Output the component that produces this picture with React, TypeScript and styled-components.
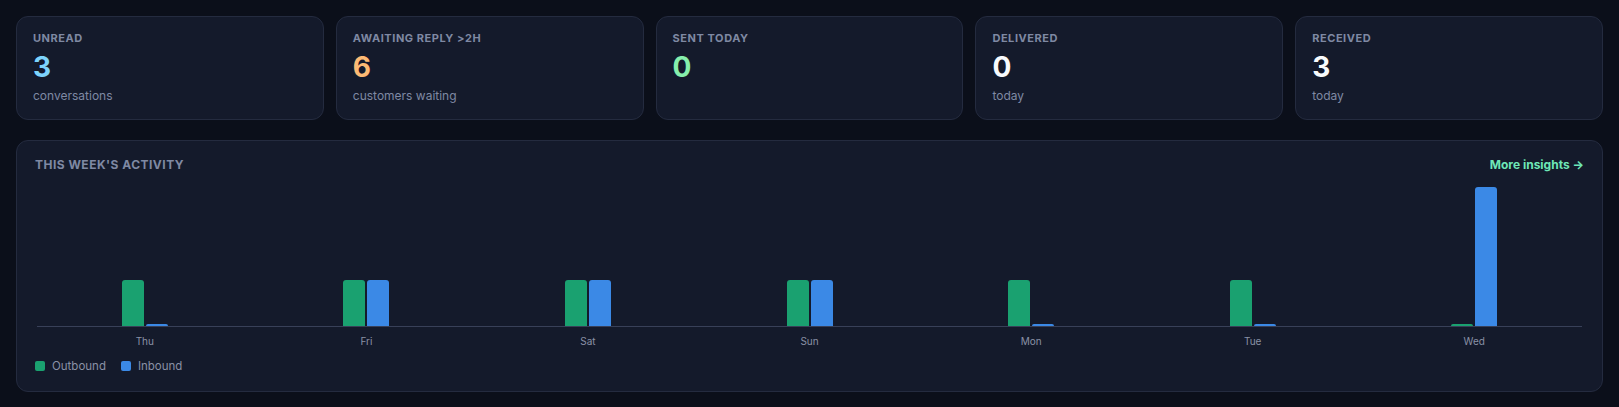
import styled, { createGlobalStyle } from "styled-components";

const GlobalStyle = createGlobalStyle`
  html, body {
    margin: 0;
    padding: 0;
    background-color: #0b0f1a;
    font-family: Inter, "Liberation Sans", sans-serif;
  }
`;

const PLOT_HEIGHT = 139;

const Page = styled.div`
  padding: 16px;
  display: flex;
  flex-direction: column;
  gap: 20px;
`;

const StatGrid = styled.div`
  display: grid;
  grid-template-columns: repeat(5, 1fr);
  gap: 12px;
`;

const Card = styled.div`
  background-color: #141a2b;
  border: 1px solid #242b3f;
  border-radius: 12px;
  padding: 14px 16px;
  display: flex;
  flex-direction: column;
`;

const StatLabel = styled.div`
  font-size: 11px;
  line-height: 14px;
  font-weight: 700;
  letter-spacing: 0.05em;
  text-transform: uppercase;
  color: #7f89a3;
`;

const StatValue = styled.div<{ $color: string }>`
  margin-top: 6px;
  font-size: 28px;
  line-height: 32px;
  font-weight: 700;
  color: ${(p) => p.$color};
`;

const StatSub = styled.div`
  margin-top: 4px;
  font-size: 12px;
  line-height: 18px;
  color: #7f89a3;
`;

const Panel = styled.div`
  background-color: #141a2b;
  border: 1px solid #242b3f;
  border-radius: 12px;
  padding: 16px 18px 17px;
`;

const PanelHeader = styled.div`
  display: flex;
  align-items: center;
  justify-content: space-between;
`;

const PanelTitle = styled.div`
  font-size: 12px;
  line-height: 16px;
  font-weight: 700;
  letter-spacing: 0.04em;
  text-transform: uppercase;
  color: #7f89a3;
`;

const InsightsLink = styled.a`
  font-size: 12px;
  line-height: 16px;
  font-weight: 700;
  color: #6ee7b7;
  text-decoration: none;
  cursor: pointer;
`;

const Chart = styled.div`
  margin: 14px -1px 0;
`;

const Plot = styled.div`
  height: ${PLOT_HEIGHT}px;
  display: flex;
`;

const Baseline = styled.div`
  height: 1px;
  margin: 0 3px;
  background-color: #384058;
`;

const Column = styled.div`
  flex: 1;
  display: flex;
  align-items: flex-end;
  justify-content: center;
  gap: 2px;
`;

const Bar = styled.div<{ $kind: "out" | "in" }>`
  width: 22px;
  border-radius: 3px 3px 0 0;
  background-color: ${(p) => (p.$kind === "out" ? "#1aa170" : "#3b89e6")};
`;

const Labels = styled.div`
  display: flex;
  margin-top: 7px;
`;

const DayLabel = styled.div`
  flex: 1;
  text-align: center;
  font-size: 10px;
  line-height: 14px;
  color: #8a91a6;
`;

const Legend = styled.div`
  margin-top: 10px;
  display: flex;
  align-items: center;
  gap: 15px;
`;

const LegendItem = styled.div`
  display: flex;
  align-items: center;
  gap: 7px;
  font-size: 11.5px;
  line-height: 16px;
  color: #8a91a6;
`;

const Swatch = styled.span<{ $color: string }>`
  width: 10px;
  height: 10px;
  border-radius: 2px;
  background-color: ${(p) => p.$color};
`;

const stats = [
  { label: "Unread", value: "3", sub: "conversations", color: "#7dd3fc" },
  { label: "Awaiting reply >2h", value: "6", sub: "customers waiting", color: "#fdba74" },
  { label: "Sent today", value: "0", sub: "", color: "#86efac" },
  { label: "Delivered", value: "0", sub: "today", color: "#f8fafc" },
  { label: "Received", value: "3", sub: "today", color: "#f8fafc" },
];

const week = [
  { day: "Thu", out: 1, in: 0 },
  { day: "Fri", out: 1, in: 1 },
  { day: "Sat", out: 1, in: 1 },
  { day: "Sun", out: 1, in: 1 },
  { day: "Mon", out: 1, in: 0 },
  { day: "Tue", out: 1, in: 0 },
  { day: "Wed", out: 0, in: 3 },
];

const maxValue = Math.max(...week.map((d) => Math.max(d.out, d.in)));
const barHeight = (v: number) => Math.max((v / maxValue) * PLOT_HEIGHT, 2);

export default function App() {
  return (
    <>
      <GlobalStyle />
      <Page>
        <StatGrid>
          {stats.map((s) => (
            <Card key={s.label}>
              <StatLabel>{s.label}</StatLabel>
              <StatValue $color={s.color}>{s.value}</StatValue>
              {s.sub && <StatSub>{s.sub}</StatSub>}
            </Card>
          ))}
        </StatGrid>

        <Panel>
          <PanelHeader>
            <PanelTitle>This week's activity</PanelTitle>
            <InsightsLink>More insights →</InsightsLink>
          </PanelHeader>
          <Chart>
            <Plot>
              {week.map((d) => (
                <Column key={d.day}>
                  <Bar $kind="out" style={{ height: barHeight(d.out) }} />
                  <Bar $kind="in" style={{ height: barHeight(d.in) }} />
                </Column>
              ))}
            </Plot>
            <Baseline />
            <Labels>
              {week.map((d) => (
                <DayLabel key={d.day}>{d.day}</DayLabel>
              ))}
            </Labels>
          </Chart>
          <Legend>
            <LegendItem>
              <Swatch $color="#1aa170" />
              Outbound
            </LegendItem>
            <LegendItem>
              <Swatch $color="#3b89e6" />
              Inbound
            </LegendItem>
          </Legend>
        </Panel>
      </Page>
    </>
  );
}
